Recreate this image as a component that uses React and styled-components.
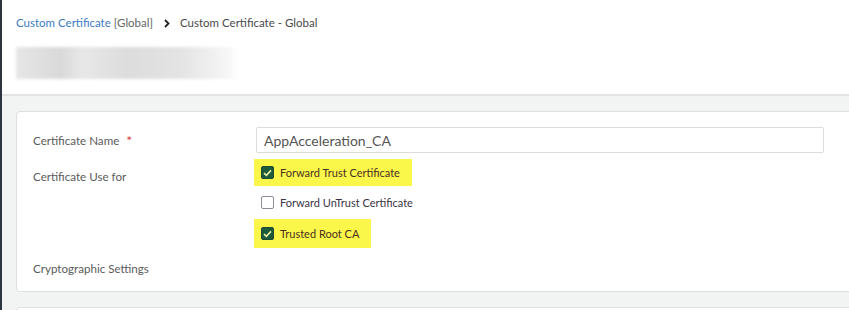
import React from "react";
import styled, { createGlobalStyle } from "styled-components";

const Global = createGlobalStyle`
  html, body { margin: 0; padding: 0; background: #fff; }
  body { font-family: Lato, "Open Sans", "Liberation Sans", sans-serif; overflow: hidden; }
  * { box-sizing: border-box; }
`;

const Shell = styled.div`
  display: flex;
  width: 849px;
  height: 310px;
  overflow: hidden;
`;

const Rail = styled.div`
  width: 2px;
  flex: none;
  background: #2b3440;
`;

const Main = styled.div`
  flex: 1;
  display: flex;
  flex-direction: column;
  min-width: 0;
`;

const Header = styled.header`
  height: 96px;
  flex: none;
  background: #fff;
  border-bottom: 2px solid #e3e5e5;
  padding: 15px 14px 0;
  display: flex;
  flex-direction: column;
  gap: 16px;
`;

const Crumbs = styled.nav`
  display: flex;
  align-items: center;
  font-size: 11.5px;
  line-height: 16px;
  color: #4a4a4a;
`;

const CrumbLink = styled.a`
  color: #3c7cc4;
  text-decoration: none;
`;

const CrumbScope = styled.span`
  color: #666;
  margin-left: 3px;
`;

const Chevron = styled.svg`
  margin: 0 10px 0 11px;
`;

const BlurTitle = styled.div`
  width: 222px;
  height: 32px;
  background: linear-gradient(90deg, #e6e6e6 0%, #d9d9d9 20%, #e8e8e8 30%, #dcdcdc 50%, #e4e4e4 75%, #f6f6f6 95%, #fff 100%);
  filter: blur(1.5px);
`;

const Body = styled.div`
  flex: 1;
  background: #f2f3f3;
  padding: 15px 0 0 14px;
  display: flex;
  flex-direction: column;
  gap: 15px;
`;

const Card = styled.section`
  background: #fff;
  border: 1px solid #dedfdf;
  border-radius: 4px;
  margin-right: -10px;
  height: ${(p) => p.$h}px;
  flex: none;
  display: grid;
  grid-template-columns: 223px 568px;
  align-content: start;
  padding: 15px 0 0 16px;
`;

const Label = styled.div`
  font-size: 11.6px;
  color: #5b5b5b;
  height: ${(p) => p.$h || 26}px;
  display: flex;
  align-items: ${(p) => (p.$top ? "flex-start" : "center")};
  padding-top: ${(p) => p.$pt || 0}px;
`;

const Star = styled.span`
  color: #e03c3c;
  margin-left: 7px;
  font-size: 14px;
`;

const Input = styled.div`
  height: 26px;
  border: 1px solid #dcdcdc;
  border-radius: 2px;
  font-size: 14px;
  color: #555;
  padding: 0 7px;
  display: flex;
  align-items: center;
`;

const Options = styled.div`
  display: flex;
  flex-direction: column;
  padding-top: 6px;
  gap: 3px;
`;

const Option = styled.label`
  display: flex;
  align-items: center;
  align-self: flex-start;
  gap: 6px;
  height: ${(p) => p.$h}px;
  margin-top: ${(p) => p.$mt || 0}px;
  padding: 0 ${(p) => (p.$hl ? 12 : 0)}px 0 7px;
  margin-left: -2px;
  background: ${(p) => (p.$hl ? "#fbf74a" : "transparent")};
  font-size: 11px;
  color: ${(p) => (p.$hl ? "#4a2f1e" : "#3a3346")};
`;

const Box = styled.span`
  width: 13px;
  height: 13px;
  border-radius: 2px;
  display: inline-flex;
  align-items: center;
  justify-content: center;
  background: ${(p) => (p.$on ? "#1d5a3a" : "#fff")};
  border: 1px solid ${(p) => (p.$on ? "#1d4a33" : "#8c8c9a")};
`;

const Check = () => (
  <svg width="9" height="8" viewBox="0 0 9 8">
    <path d="M1 4.2 L3.4 6.4 L8 1.4" fill="none" stroke="#e6f0a8" strokeWidth="1.6" />
  </svg>
);

const Spacer = styled.div``;

export default function App() {
  return (
    <>
      <Global />
      <Shell>
        <Rail />
        <Main>
          <Header>
            <Crumbs>
              <CrumbLink>Custom Certificate</CrumbLink>
              <CrumbScope>[Global]</CrumbScope>
              <Chevron width="6" height="9" viewBox="0 0 6 9">
                <path d="M1 1 L4.5 4.5 L1 8" fill="none" stroke="#222" strokeWidth="1.8" />
              </Chevron>
              <span>Custom Certificate - Global</span>
            </Crumbs>
            <BlurTitle />
          </Header>
          <Body>
            <Card $h={181}>
              <Label>Certificate Name<Star>*</Star></Label>
              <Input>AppAcceleration_CA</Input>
              <Label $h={96} $top $pt={17}>Certificate Use for</Label>
              <Options>
                <Option $hl $h={27}><Box $on><Check /></Box>Forward Trust Certificate</Option>
                <Option $h={26}><Box />Forward UnTrust Certificate</Option>
                <Option $hl $h={29} $mt={1}><Box $on><Check /></Box>Trusted Root CA</Option>
              </Options>
              <Label $h={40} $top $pt={13}>Cryptographic Settings</Label>
              <Spacer />
            </Card>
            <Card $h={40} />
          </Body>
        </Main>
      </Shell>
    </>
  );
}
